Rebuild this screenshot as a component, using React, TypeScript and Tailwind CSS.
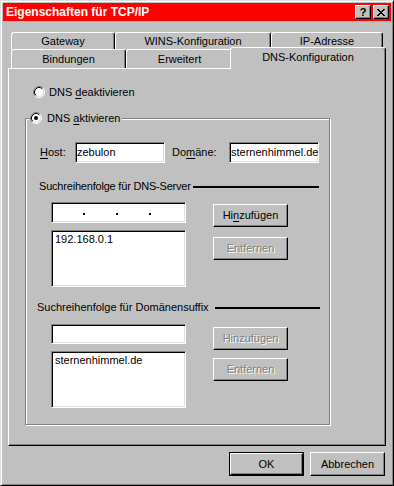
import type { ReactNode } from 'react'

// Win95-style "Eigenschaften für TCP/IP" dialog, DNS tab.

const raised =
  'border border-t-white border-l-white border-r-black border-b-black shadow-[inset_-1px_-1px_0_#808080]'
const sunken =
  'border border-t-[#808080] border-l-[#808080] border-r-white border-b-white shadow-[inset_1px_1px_0_#000,inset_-1px_-1px_0_#dfdfdf] bg-white'

function U({ children }: { children: ReactNode }) {
  return <span className="underline underline-offset-[2px]">{children}</span>
}

function Radio({ checked }: { checked?: boolean }) {
  return (
    <svg width="12" height="12" viewBox="0 0 12 12" className="shrink-0">
      <circle cx="6" cy="6" r="4.6" fill="#fff" />
      <path d="M2.11 9.89 A5.5 5.5 0 0 1 9.89 2.11" fill="none" stroke="#808080" strokeWidth="1" />
      <path d="M9.89 2.11 A5.5 5.5 0 0 1 2.11 9.89" fill="none" stroke="#fff" strokeWidth="1" />
      <path d="M2.82 9.18 A4.5 4.5 0 0 1 9.18 2.82" fill="none" stroke="#000" strokeWidth="1" />
      <path d="M9.18 2.82 A4.5 4.5 0 0 1 2.82 9.18" fill="none" stroke="#dfdfdf" strokeWidth="1" />
      {checked && <circle cx="6" cy="6" r="2" fill="#000" />}
    </svg>
  )
}

function Button({
  children,
  disabled,
  className = '',
}: {
  children: ReactNode
  disabled?: boolean
  className?: string
}) {
  return (
    <div
      className={`w-[75px] h-[23px] flex items-center justify-center ${raised} ${
        disabled ? 'text-[#808080] [text-shadow:1px_1px_0_#fff]' : ''
      } ${className}`}
    >
      {children}
    </div>
  )
}

function Tab({ label, w, h, selected }: { label: string; w: string; h: string; selected?: boolean }) {
  return (
    <div
      className={`${w} ${h} shrink-0 flex justify-center border-t border-l border-r border-t-white border-l-white border-r-black rounded-t-[3px] shadow-[inset_-1px_0_0_#808080] bg-[#c0c0c0] ${
        selected ? 'relative z-10 -mt-[2px] pt-[3px] -ml-[3px]' : 'items-center'
      }`}
    >
      {label}
    </div>
  )
}

function Close() {
  const rows = ['11000011', '01100110', '00111100', '00011000', '00111100', '01100110', '11000011']
  return (
    <svg width="8" height="7" viewBox="0 0 8 7" shapeRendering="crispEdges">
      {rows.map((r, y) =>
        r.split('').map((c, x) => (c === '1' ? <rect key={`${x}-${y}`} x={x} y={y} width="1" height="1" fill="#000" /> : null))
      )}
    </svg>
  )
}

export default function App() {
  return (
    <div className="w-[394px] h-[486px] bg-[#c0c0c0] border border-t-[#dfdfdf] border-l-[#dfdfdf] border-r-black border-b-black shadow-[inset_1px_1px_0_#fff,inset_-1px_-1px_0_#808080] p-[2px] flex flex-col font-['Liberation_Sans',Arial,sans-serif] text-[11px] leading-[13px] text-black">
      {/* title bar */}
      <div className="h-[18px] bg-[#ff0000] flex items-center pl-[3px] pr-[2px] shrink-0">
        <span className="text-white font-bold text-[12px] leading-[14px]">Eigenschaften für TCP/IP</span>
        <div className="ml-auto flex gap-[2px]">
          <div className={`w-[16px] h-[14px] bg-[#c0c0c0] flex items-center justify-center font-bold text-[11px] leading-[12px] ${raised}`}>
            ?
          </div>
          <div className={`w-[16px] h-[14px] bg-[#c0c0c0] flex items-center justify-center ${raised}`}>
            <Close />
          </div>
        </div>
      </div>

      {/* tabs */}
      <div className="mt-[11px] ml-[8px] flex h-[17px]">
        <Tab label="Gateway" w="w-[104px]" h="h-[17px]" />
        <Tab label="WINS-Konfiguration" w="w-[156px]" h="h-[17px]" />
        <Tab label="IP-Adresse" w="w-[112px]" h="h-[17px]" />
      </div>
      <div className="ml-[8px] flex h-[19px] items-start">
        <Tab label="Bindungen" w="w-[115px]" h="h-[19px]" />
        <Tab label="Erweitert" w="w-[107px]" h="h-[19px]" />
        <Tab label="DNS-Konfiguration" w="w-[156px]" h="h-[22px]" selected />
      </div>

      {/* tab panel */}
      <div className="ml-[5px] w-[378px] h-[378px] shrink-0 flex flex-col border border-t-white border-l-white border-r-black border-b-black shadow-[inset_-1px_-1px_0_#808080]">
        <div className="mt-[17px] ml-[24px] flex items-center gap-[4px] h-[12px]">
          <Radio />
          <span>
            DNS <U>d</U>eaktivieren
          </span>
        </div>

        <div className="mt-[20px] ml-[16px] relative w-[305px] h-[307px] flex flex-col border border-[#808080] shadow-[inset_1px_1px_0_#fff,1px_1px_0_#fff]">
          <div className="absolute -top-[8px] left-[3px] h-[14px] flex items-center gap-[5px] pl-[1px] pr-[2px] bg-[#c0c0c0]">
            <Radio checked />
            <span>
              DNS <U>a</U>ktivieren
            </span>
          </div>

          <div className="mt-[23px] ml-[14px] flex items-center">
            <span className="w-[35px]">
              <U>H</U>ost:
            </span>
            <div className={`w-[90px] h-[21px] flex items-center pl-[1px] ${sunken}`}>zebulon</div>
            <span className="ml-[7px] w-[57px]">
              Do<U>m</U>äne:
            </span>
            <div className={`w-[90px] h-[21px] flex items-center pl-[1px] ${sunken}`}>sternenhimmel.de</div>
          </div>

          <div className="mt-[17px] ml-[13px] mr-[10px] flex items-center h-[13px]">
            <span className="shrink-0 whitespace-nowrap tracking-[-0.2px]">Suchreihenfolge für DNS-Server</span>
            <div className="ml-[2px] flex-1 h-[2px] bg-black" />
          </div>

          <div className="mt-[9px] ml-[25px] flex">
            <div className="w-[135px] flex flex-col">
              <div className={`h-[21px] flex pt-[10px] ${sunken}`}>
                <span className="ml-[31px] w-[2px] h-[2px] bg-black" />
                <span className="ml-[31px] w-[2px] h-[2px] bg-black" />
                <span className="ml-[31px] w-[2px] h-[2px] bg-black" />
              </div>
              <div className={`mt-[7px] h-[57px] pl-[3px] pt-[2px] ${sunken}`}>192.168.0.1</div>
            </div>
            <div className="ml-[27px] mt-[2px] flex flex-col">
              <Button>
                Hi<U>n</U>zufügen
              </Button>
              <Button disabled className="mt-[10px]">
                Entfernen
              </Button>
            </div>
          </div>

          <div className="mt-[14px] ml-[11px] mr-[9px] flex items-center h-[13px]">
            <span className="shrink-0 whitespace-nowrap">Suchreihenfolge für Domänensuffix</span>
            <div className="ml-[6px] flex-1 h-[2px] bg-black" />
          </div>

          <div className="mt-[10px] ml-[25px] flex">
            <div className="w-[135px] flex flex-col">
              <div className={`h-[20px] ${sunken}`} />
              <div className={`mt-[7px] h-[57px] pl-[3px] pt-[2px] ${sunken}`}>sternenhimmel.de</div>
            </div>
            <div className="ml-[27px] mt-[3px] flex flex-col">
              <Button disabled>Hinzufügen</Button>
              <Button disabled className="mt-[8px]">
                Entfernen
              </Button>
            </div>
          </div>
        </div>
      </div>

      {/* dialog buttons */}
      <div className="mt-[6px] pr-[6px] flex justify-end gap-[6px]">
        <div className="w-[75px] h-[24px] border border-black">
          <div className={`w-full h-full flex items-center justify-center ${raised}`}>OK</div>
        </div>
        <Button className="h-[24px]">Abbrechen</Button>
      </div>
    </div>
  )
}
